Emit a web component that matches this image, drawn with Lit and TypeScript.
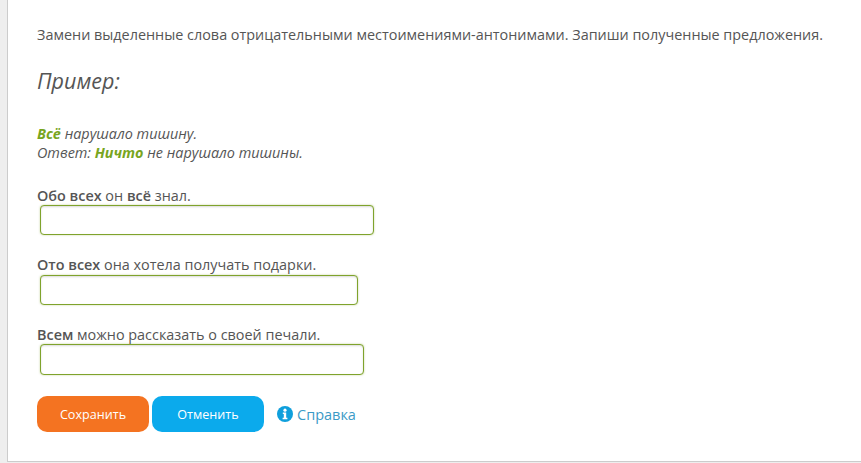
import { LitElement, html, css } from 'lit';
import { customElement } from 'lit/decorators.js';

const exercises = [
  { text: html`<b>Обо всех</b> он <b>всё</b> знал.`, width: 334 },
  { text: html`<b>Ото всех</b> она хотела получать подарки.`, width: 318 },
  { text: html`<b>Всем</b> можно рассказать о своей печали.`, width: 324 }
];

@customElement('app-root')
export class AppRoot extends LitElement {
  static styles = css`
    :host {
      display: block;
      height: 463px;
      background: #eeeeee;
      padding: 0 0 1px 7px;
      box-sizing: border-box;
      font-family: 'Open Sans', sans-serif;
      font-size: 14.4px;
      color: #555555;
    }

    .card {
      height: 100%;
      box-sizing: border-box;
      background: #fff;
      border-left: 1px solid #cccccc;
      border-bottom: 1px solid #cccccc;
      padding: 25px 0 0 29px;
    }

    .task {
      margin: 0;
      line-height: 20px;
    }

    h2 {
      margin: 20px 0 0;
      font-size: 21.5px;
      line-height: 32px;
      font-weight: 400;
      font-style: italic;
    }

    .example {
      margin: 27px 0 0;
      line-height: 19px;
      font-style: italic;
    }

    .example b {
      color: #78a51e;
    }

    .exercise {
      margin-top: 21px;
    }

    .exercise:first-of-type {
      margin-top: 24.8px;
    }

    .exercise p {
      margin: 0;
      line-height: 18.2px;
    }

    .exercise b {
      font-weight: 600;
    }

    input {
      display: block;
      box-sizing: border-box;
      height: 30.4px;
      margin: 0 0 0 3px;
      padding: 0 6px;
      background: #fff;
      border: 1px solid #7fa32c;
      border-radius: 4px;
      box-shadow: inset 0 1px 2px rgba(0, 0, 0, 0.15), 0 0 2px rgba(127, 163, 44, 0.5);
      outline: none;
    }

    .actions {
      display: flex;
      align-items: center;
      margin-top: 21.4px;
    }

    button {
      height: 36px;
      padding: 1px 0 0;
      border: none;
      border-radius: 10px;
      color: #fff;
      font: inherit;
      font-size: 12.6px;
      cursor: pointer;
    }

    .save {
      width: 112px;
      background: #f47321;
    }

    .cancel {
      width: 112px;
      margin-left: 3px;
      background: #0baaec;
    }

    .help {
      display: flex;
      align-items: center;
      gap: 4px;
      margin: 1px 0 0 13px;
      color: #3b9ac6;
      font-size: 14.5px;
      text-decoration: none;
    }

    .help svg {
      width: 16px;
      height: 16px;
    }
  `;

  render() {
    return html`
      <div class="card">
        <p class="task">Замени выделенные слова отрицательными местоимениями-антонимами. Запиши полученные предложения.</p>
        <h2>Пример:</h2>
        <p class="example">
          <b>Всё</b> нарушало тишину.<br />
          Ответ: <b>Ничто</b> не нарушало тишины.
        </p>
        ${exercises.map((item) => html`
          <div class="exercise">
            <p>${item.text}</p>
            <input type="text" style="width: ${item.width}px" />
          </div>
        `)}
        <div class="actions">
          <button class="save">Сохранить</button>
          <button class="cancel">Отменить</button>
          <a class="help" href="#">
            <svg viewBox="0 0 16 16">
              <circle cx="8" cy="8" r="8" fill="#0f9fdc"></circle>
              <circle cx="8" cy="4.2" r="1.6" fill="#fff"></circle>
              <path d="M5.8 6.6h3.4v5.2h1.2v1.4H5.6v-1.4h1.2V8H5.8z" fill="#fff"></path>
            </svg>
            Справка
          </a>
        </div>
      </div>
    `;
  }
}
